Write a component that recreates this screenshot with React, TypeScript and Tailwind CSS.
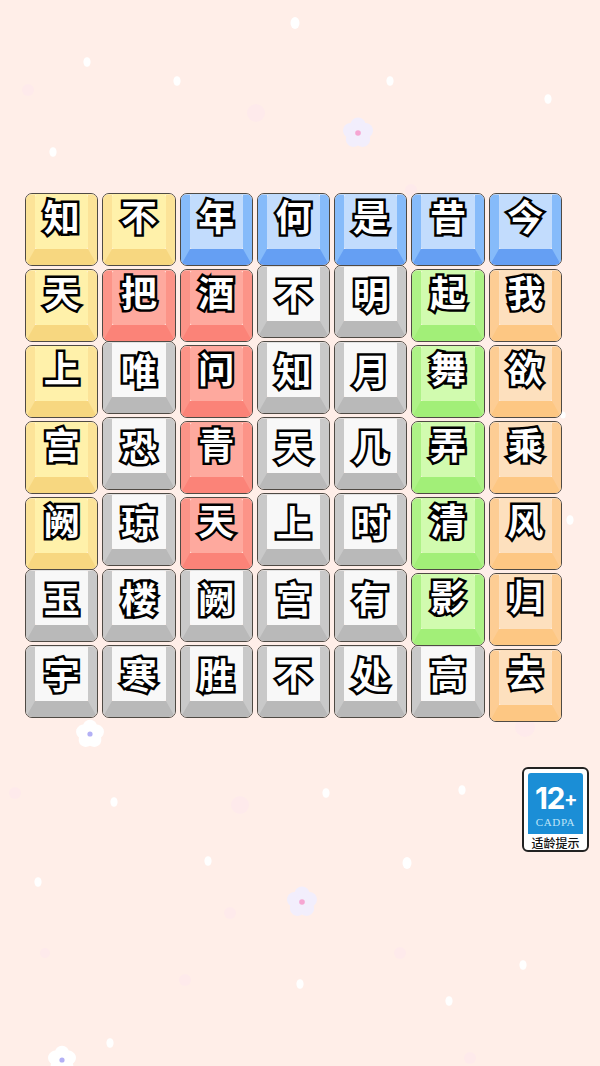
import React from 'react';

type Tone = 'yellow' | 'blue' | 'red' | 'green' | 'orange' | 'grey';

const tones: Record<Tone, { frame: string; face: string; lifted: boolean }> = {
  yellow: {
    frame: 'border-t-[#fff1aa] border-x-[#fce398] border-b-[#f7d780]',
    face: 'bg-[#fff1aa]',
    lifted: false,
  },
  blue: {
    frame: 'border-t-[#bfdbfd] border-x-[#86bbfa] border-b-[#659ff3]',
    face: 'bg-[#c2dcfd]',
    lifted: false,
  },
  red: {
    frame: 'border-t-[#fea79c] border-x-[#fc9488] border-b-[#fb8378]',
    face: 'bg-[#fea99e]',
    lifted: false,
  },
  green: {
    frame: 'border-t-[#cffbac] border-x-[#aef287] border-b-[#a2ef78]',
    face: 'bg-[#d1fbaf]',
    lifted: false,
  },
  orange: {
    frame: 'border-t-[#fddfbc] border-x-[#fdcd94] border-b-[#fdc783]',
    face: 'bg-[#fde0be]',
    lifted: false,
  },
  grey: {
    frame: 'border-t-[#e2e2e2] border-x-[#c9c9c9] border-b-[#b9b9b9]',
    face: 'bg-[#f8f8f8]',
    lifted: true,
  },
};

const y: Tone = 'yellow';
const b: Tone = 'blue';
const r: Tone = 'red';
const g: Tone = 'green';
const o: Tone = 'orange';
const w: Tone = 'grey';

const rows: [string, Tone][][] = [
  [['知', y], ['不', y], ['年', b], ['何', b], ['是', b], ['昔', b], ['今', b]],
  [['天', y], ['把', r], ['酒', r], ['不', w], ['明', w], ['起', g], ['我', o]],
  [['上', y], ['唯', w], ['问', r], ['知', w], ['月', w], ['舞', g], ['欲', o]],
  [['宫', y], ['恐', w], ['青', r], ['天', w], ['几', w], ['弄', g], ['乘', o]],
  [['阙', y], ['琼', w], ['天', r], ['上', w], ['时', w], ['清', g], ['风', o]],
  [['玉', w], ['楼', w], ['阙', w], ['宫', w], ['有', w], ['影', g], ['归', o]],
  [['宇', w], ['寒', w], ['胜', w], ['不', w], ['处', w], ['高', w], ['去', o]],
];

const Key: React.FC<{ char: string; tone: Tone }> = ({ char, tone }) => {
  const t = tones[tone];
  return (
    <div className={t.lifted ? 'h-[73px]' : 'h-[73px] mt-1'}>
      <div className="h-full rounded-[7px] border border-[#4f4a44]">
        <div className={`h-full rounded-[6px] border-t border-x-[9px] border-b-[16px] ${t.frame}`}>
          <div className={`flex h-full items-center justify-center rounded-[2px] ${t.face}`}>
            <span
              className={`font-['Noto_Sans_CJK_SC',sans-serif] text-[36px] leading-none font-bold whitespace-nowrap text-white [-webkit-text-stroke:5px_#000] [paint-order:stroke_fill] ${
                t.lifted ? '-translate-y-px' : '-translate-y-[7px]'
              }`}
            >
              {char}
            </span>
          </div>
        </div>
      </div>
    </div>
  );
};

const blobs: [number, number, number][] = [
  [295, 23, 5], [87, 62, 4], [177, 81, 4], [390, 81, 4], [548, 99, 4], [53, 152, 4],
  [114, 802, 4], [326, 793, 4], [462, 790, 4], [208, 861, 4], [407, 863, 5], [38, 882, 4],
  [300, 984, 4], [449, 1001, 4], [110, 1043, 4], [523, 965, 4], [563, 415, 3], [570, 520, 4],
];

const faint: [number, number, number][] = [
  [256, 113, 9], [28, 90, 6], [411, 190, 6], [15, 793, 6], [240, 805, 9], [230, 913, 6],
  [45, 953, 5], [400, 953, 6], [185, 980, 6], [525, 727, 10], [470, 1058, 6],
];

const Flower: React.FC<{ x: number; y: number; size: number; fill: string; dot: string }> = ({
  x,
  y,
  size,
  fill,
  dot,
}) => (
  <g transform={`translate(${x} ${y})`}>
    {[0, 72, 144, 216, 288].map((a) => (
      <circle key={a} cx={0} cy={-size * 0.55} r={size * 0.55} fill={fill} transform={`rotate(${a})`} />
    ))}
    <circle r={size * 0.5} fill={fill} />
    <circle r={size * 0.2} fill={dot} />
  </g>
);

const Petals: React.FC = () => (
  <svg className="absolute inset-0 blur-[0.5px]" width={600} height={1066} viewBox="0 0 600 1066">
    {faint.map(([cx, cy, rad], i) => (
      <circle key={i} cx={cx} cy={cy} r={rad} fill="#feeaeb" />
    ))}
    {blobs.map(([cx, cy, rad], i) => (
      <ellipse key={i} cx={cx} cy={cy} rx={rad * 0.9} ry={rad * 1.2} fill="#ffffff" />
    ))}
    <Flower x={358} y={133} size={14} fill="#f2eefc" dot="#f6a6d2" />
    <Flower x={302} y={902} size={14} fill="#f2eefc" dot="#f6a6d2" />
    <Flower x={90} y={734} size={13} fill="#ffffff" dot="#b3b0f5" />
    <Flower x={62} y={1060} size={13} fill="#ffffff" dot="#b3b0f5" />
  </svg>
);

const AgeBadge: React.FC = () => (
  <div className="mt-[46px] mr-[11px] flex h-[85px] w-[67px] flex-col self-end rounded-[6px] border-2 border-[#222] bg-white px-1 pt-1">
    <div className="flex h-[61px] flex-col items-center rounded-t-[3px] bg-[#1b8ed6]">
      <div className="mt-[10px] font-['Inter',sans-serif] text-[30px] leading-none font-bold tracking-[-1.5px] text-white">
        12<span className="align-[3px] text-[20px]">+</span>
      </div>
      <div className="mt-[4px] font-['Liberation_Serif',serif] text-[11px] leading-none tracking-[0.6px] text-[#bfe5f8]">
        CADPA
      </div>
    </div>
    <div className="mt-px text-center font-['Noto_Sans_CJK_SC',sans-serif] text-[12px] leading-[15px] font-medium whitespace-nowrap text-[#111]">
      适龄提示
    </div>
  </div>
);

export default function App() {
  return (
    <div className="relative h-[1066px] w-[600px] overflow-hidden bg-[#ffeee8]">
      <Petals />
      <div className="relative flex flex-col pt-[189px]">
        <div className="ml-[25px] grid w-[537px] auto-rows-[76px] grid-cols-7 gap-x-1">
          {rows.flat().map(([char, tone], idx) => (
            <Key key={idx} char={char} tone={tone} />
          ))}
        </div>
        <AgeBadge />
      </div>
    </div>
  );
}
